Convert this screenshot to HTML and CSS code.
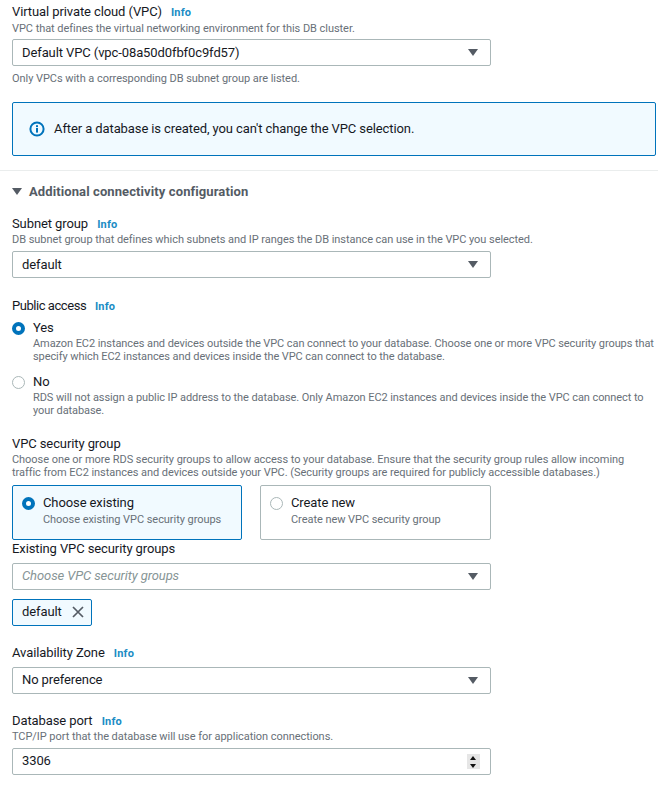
FILE: index.html
```html
<!DOCTYPE html>
<html lang="en">
<head>
    <meta charset="UTF-8">
    <meta name="viewport" content="width=device-width, initial-scale=1.0">
    <title>Connectivity</title>
    <link rel="stylesheet" href="styles.css">
</head>
<body>
    <div class="block block-vpc">
        <div class="label">Virtual private cloud (VPC) <a class="info">Info</a></div>
        <div class="desc">VPC that defines the virtual networking environment for this DB cluster.</div>
        <div class="select">
            <span>Default VPC (vpc-08a50d0fbf0c9fd57)</span>
            <i class="caret"></i>
        </div>
        <div class="hint">Only VPCs with a corresponding DB subnet group are listed.</div>
    </div>

    <div class="alert">
        <svg class="alert-icon" width="16" height="16" viewBox="0 0 16 16">
            <circle cx="8" cy="8" r="6.6" fill="none" stroke="#0073bb" stroke-width="2"/>
            <rect x="7" y="7" width="2" height="4.6" fill="#0073bb"/>
            <rect x="7" y="4.2" width="2" height="1.9" fill="#0073bb"/>
        </svg>
        <span>After a database is created, you can't change the VPC selection.</span>
    </div>

    <hr class="divider">

    <div class="section-title"><i class="caret caret-section"></i>Additional connectivity configuration</div>

    <div class="block block-subnet">
        <div class="label">Subnet group <a class="info">Info</a></div>
        <div class="desc">DB subnet group that defines which subnets and IP ranges the DB instance can use in the VPC you selected.</div>
        <div class="select">
            <span>default</span>
            <i class="caret"></i>
        </div>
    </div>

    <div class="block block-public">
        <div class="label">Public access <a class="info">Info</a></div>
        <div class="radio-row">
            <i class="radio radio-on"></i>
            <div>
                <div class="radio-title">Yes</div>
                <div class="desc">Amazon EC2 instances and devices outside the VPC can connect to your database. Choose one or more VPC security groups that specify which EC2 instances and devices inside the VPC can connect to the database.</div>
            </div>
        </div>
        <div class="radio-row radio-row-no">
            <i class="radio"></i>
            <div>
                <div class="radio-title">No</div>
                <div class="desc">RDS will not assign a public IP address to the database. Only Amazon EC2 instances and devices inside the VPC can connect to your database.</div>
            </div>
        </div>
    </div>

    <div class="block block-sg">
        <div class="label">VPC security group</div>
        <div class="desc">Choose one or more RDS security groups to allow access to your database. Ensure that the security group rules allow incoming traffic from EC2 instances and devices outside your VPC. (Security groups are required for publicly accessible databases.)</div>
        <div class="cards">
            <div class="card card-on">
                <i class="radio radio-on"></i>
                <div>
                    <div class="radio-title">Choose existing</div>
                    <div class="desc">Choose existing VPC security groups</div>
                </div>
            </div>
            <div class="card">
                <i class="radio"></i>
                <div>
                    <div class="radio-title">Create new</div>
                    <div class="desc">Create new VPC security group</div>
                </div>
            </div>
        </div>
        <div class="label label-existing">Existing VPC security groups</div>
        <div class="select">
            <span class="placeholder">Choose VPC security groups</span>
            <i class="caret"></i>
        </div>
        <div class="token">
            <span>default</span>
            <svg width="12" height="12" viewBox="0 0 12 12">
                <path d="M1 1l10 10M11 1L1 11" fill="none" stroke="#545b64" stroke-width="1.7"/>
            </svg>
        </div>
    </div>

    <div class="block block-az">
        <div class="label">Availability Zone <a class="info">Info</a></div>
        <div class="select">
            <span>No preference</span>
            <i class="caret"></i>
        </div>
    </div>

    <div class="block block-port">
        <div class="label">Database port <a class="info">Info</a></div>
        <div class="desc">TCP/IP port that the database will use for application connections.</div>
        <div class="select select-number">
            <span>3306</span>
            <span class="spinner"><i class="spin-up"></i><i class="spin-down"></i></span>
        </div>
    </div>
</body>
</html>
```

FILE: styles.css
```css
:root {
    --color-text: #16191f;
    --color-muted: #687078;
    --color-link: #0073bb;
    --color-info: #1a8cc4;
    --color-border: #aab7b8;
    --color-blue-bg: #f1faff;
}

body {
    font-family: 'Roboto', sans-serif;
    font-size: 13px;
    line-height: 16px;
    letter-spacing: -0.1px;
    margin: 0;
    padding: 3px 0 0 12px;
    background: #fff;
    color: var(--color-text);
}

.label {
    line-height: 17px;
}

.info {
    color: var(--color-info);
    font-size: 11px;
    font-weight: 700;
    letter-spacing: 0.2px;
    margin-left: 6px;
}

.desc, .hint {
    color: var(--color-muted);
    font-size: 11px;
    line-height: 13px;
    letter-spacing: -0.05px;
}

.hint {
    margin-top: 6px;
}

.select {
    box-sizing: border-box;
    width: 479px;
    height: 27px;
    margin-top: 5px;
    padding: 0 12px 0 9px;
    display: flex;
    align-items: center;
    justify-content: space-between;
    background: #fff;
    border: 1px solid var(--color-border);
    border-radius: 2px;
}

.select-number {
    padding-right: 10px;
}

.block-vpc .desc {
    margin-top: 1px;
}

.block-vpc .select {
    margin-top: 4px;
}

.caret {
    display: block;
    width: 0;
    height: 0;
    border-left: 5px solid transparent;
    border-right: 5px solid transparent;
    border-top: 7px solid #545b64;
}

.alert {
    box-sizing: border-box;
    height: 54px;
    margin: 17px 2px 0 0;
    padding-left: 16px;
    display: flex;
    align-items: center;
    gap: 9px;
    background: var(--color-blue-bg);
    border: 1px solid var(--color-link);
    border-radius: 2px;
}

.divider {
    border: none;
    border-top: 1px solid #eaeded;
    margin: 14px 0 0 -12px;
}

.section-title {
    display: flex;
    align-items: center;
    margin-top: 12px;
    color: #545b64;
    font-weight: 700;
    line-height: 17px;
    letter-spacing: 0.1px;
}

.caret-section {
    margin-right: 7px;
}

.block-subnet {
    margin-top: 15px;
}

.block-public {
    margin-top: 19px;
}

.block-public > .label {
    letter-spacing: -0.45px;
}

.radio-row {
    display: flex;
    gap: 8px;
    margin-top: 5px;
}

.radio-row .desc {
    margin-top: 1px;
    letter-spacing: -0.08px;
}

.radio-row-no {
    margin-top: 11px;
}

.radio {
    flex: none;
    box-sizing: border-box;
    width: 13px;
    height: 13px;
    margin-top: 2px;
    border: 1px solid var(--color-border);
    border-radius: 50%;
    background: #fff;
}

.radio-on {
    border: 4px solid var(--color-link);
}

.block-sg {
    margin-top: 18px;
}

.block-sg > .desc {
    margin-top: 1px;
    max-width: 620px;
}

.cards {
    display: flex;
    gap: 18px;
    width: 479px;
    margin-top: 6px;
}

.card {
    box-sizing: border-box;
    flex: 1;
    height: 55px;
    padding: 9px 9px;
    display: flex;
    gap: 8px;
    border: 1px solid var(--color-border);
    border-radius: 2px;
}

.card .desc {
    margin-top: 2px;
}

.card-on {
    flex: none;
    width: 230px;
    background: var(--color-blue-bg);
    border-color: #0073bb;
}

.label-existing {
    margin-top: 0;
}

.token {
    box-sizing: border-box;
    width: 80px;
    height: 27px;
    margin-top: 9px;
    padding: 0 7px 1px 9px;
    display: flex;
    align-items: center;
    justify-content: space-between;
    background: var(--color-blue-bg);
    border: 1px solid var(--color-link);
    border-radius: 2px;
}

.placeholder {
    color: #879596;
    font-style: italic;
}

.block-sg .select {
    margin-top: 6px;
    padding-bottom: 1px;
}

.block-az {
    margin-top: 18px;
}

.block-az .select, .select-number {
    padding-bottom: 1px;
}

.block-port {
    margin-top: 18px;
}

.spinner {
    display: flex;
    flex-direction: column;
    gap: 1px;
    width: 13px;
    height: 15px;
    background: #e6e6e6;
}

.spinner i {
    flex: 1;
    display: block;
    position: relative;
}

.spin-up::after, .spin-down::after {
    content: "";
    position: absolute;
    left: 3px;
    top: 2px;
    border-left: 3.5px solid transparent;
    border-right: 3.5px solid transparent;
}

.spin-up::after {
    border-bottom: 4px solid #111;
}

.spin-down::after {
    border-top: 4px solid #111;
}
```
